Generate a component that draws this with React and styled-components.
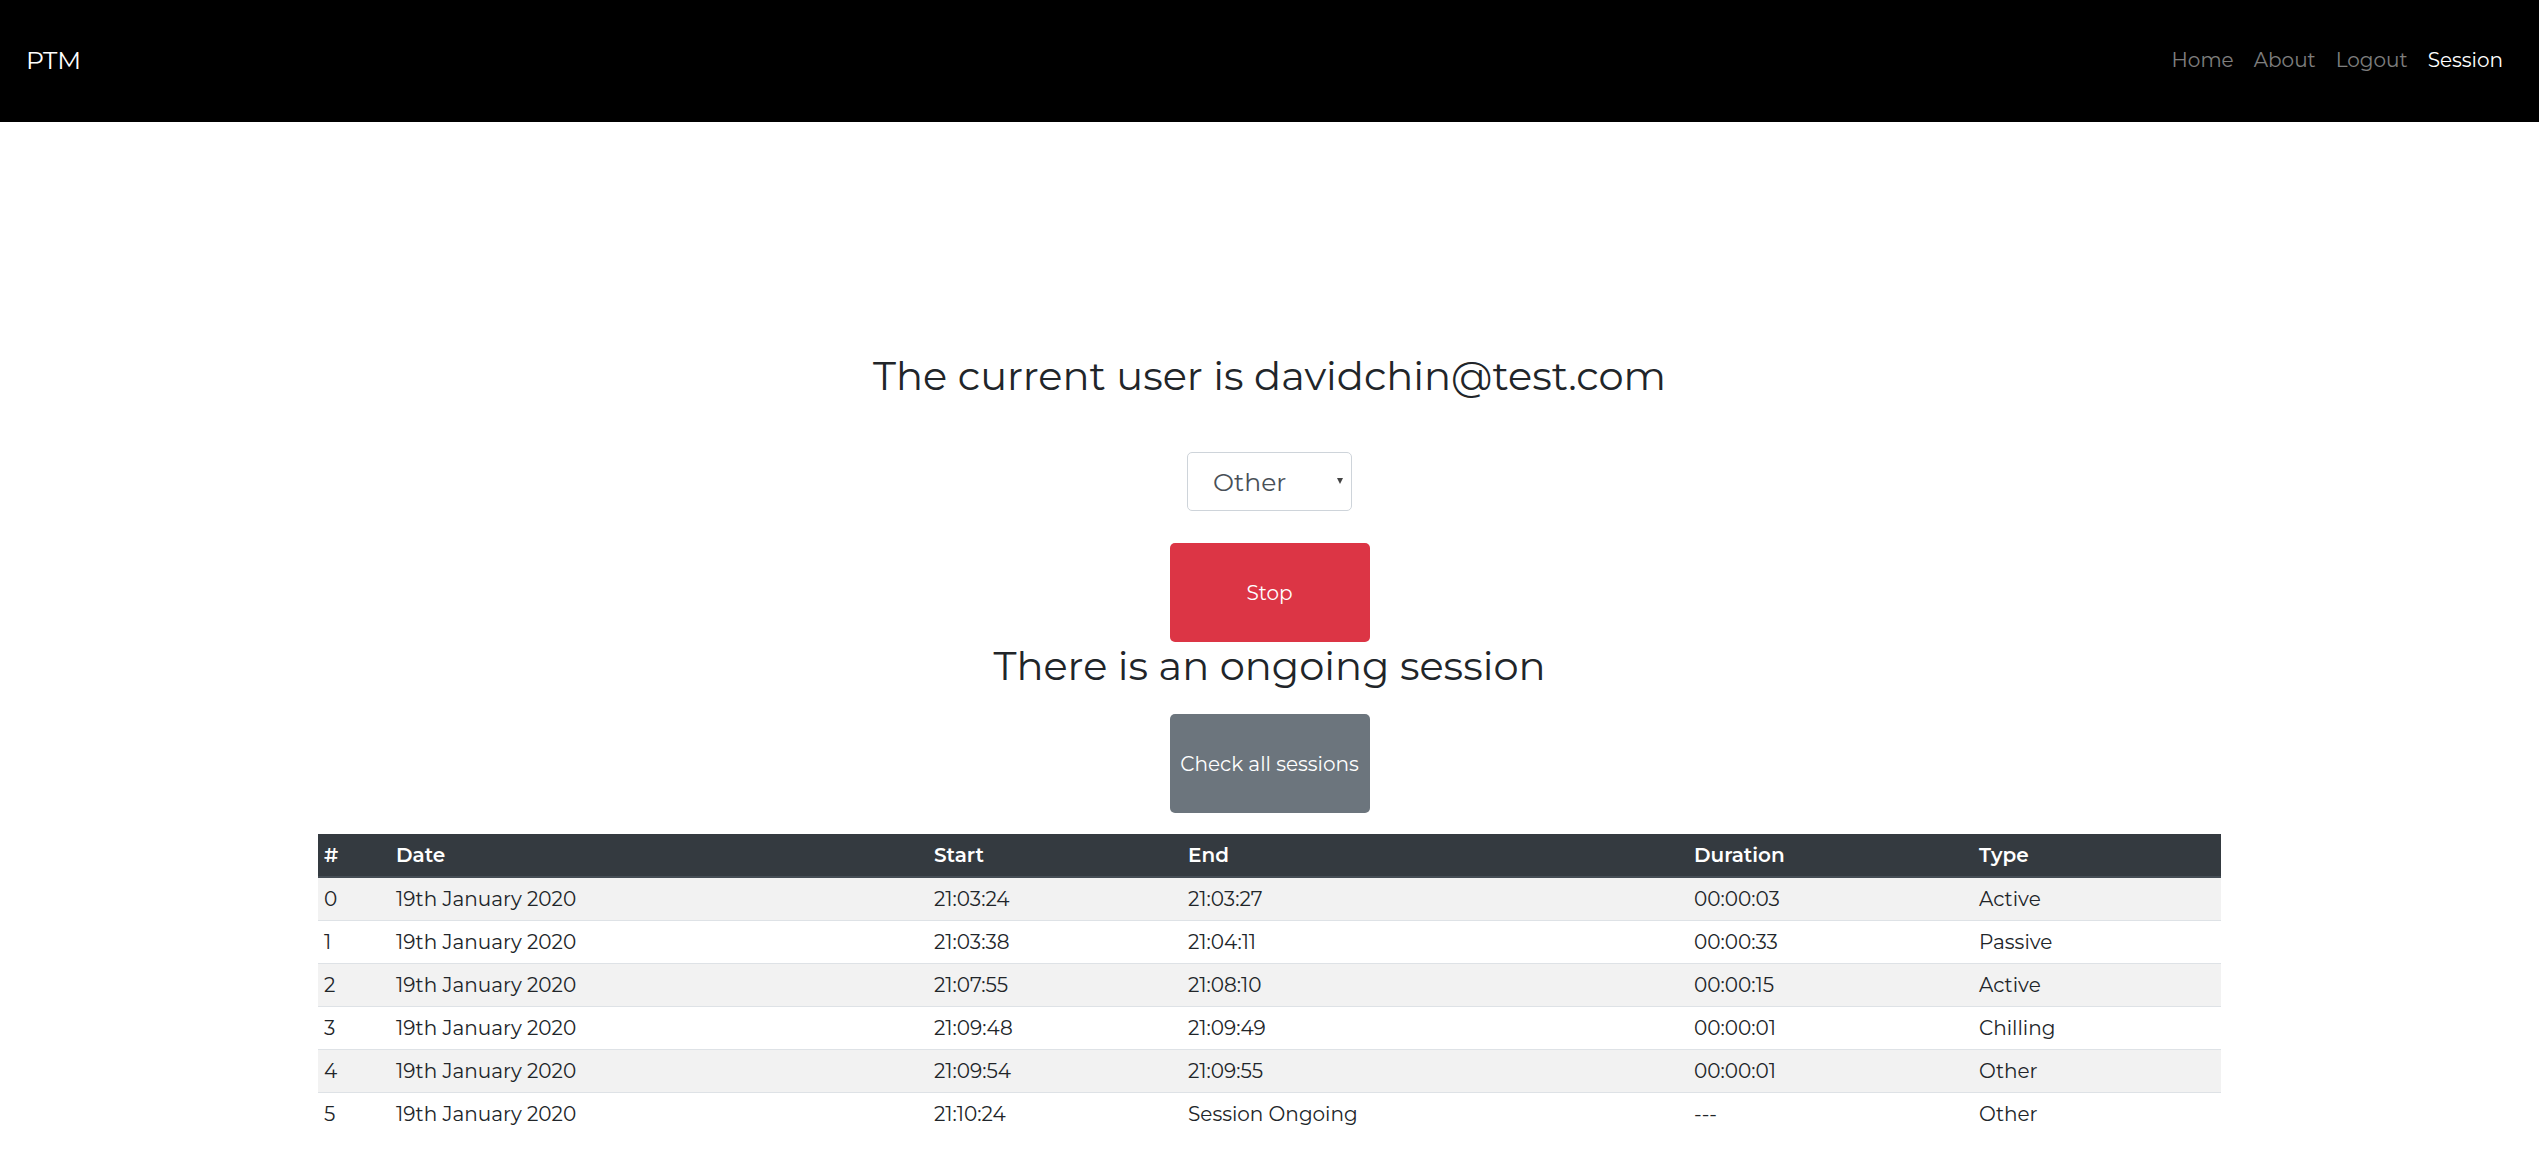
import React from "react";
import styled, { createGlobalStyle } from "styled-components";

const GlobalStyle = createGlobalStyle`
  html, body { margin: 0; padding: 0; background: #fff; }
  body {
    font-family: "Montserrat", "Inter", "Open Sans", sans-serif;
    color: #212529;
    font-weight: 400;
  }
  * { box-sizing: border-box; }
`;

const Navbar = styled.nav`
  height: 122px;
  background: #000;
  display: flex;
  align-items: center;
  justify-content: space-between;
  padding: 0 36px 0 26px;
`;

const Brand = styled.a`
  font-size: 25px;
  font-weight: 400;
  color: #fff;
  text-decoration: none;
  line-height: 1;
  margin-top: -2px;
`;

const NavLinks = styled.div`
  display: flex;
  align-items: center;
  margin-top: -2px;
`;

const NavLink = styled.a`
  padding: 0 10px;
  font-size: 20px;
  font-weight: 400;
  line-height: 30px;
  text-decoration: none;
  color: ${(p) => (p.$active ? "#fff" : "rgba(255,255,255,0.5)")};
  &:last-child { padding-right: 0; }
`;

const Main = styled.main`
  display: flex;
  flex-direction: column;
  align-items: center;
  padding-top: 230px;
`;

const Title = styled.h2`
  margin: 0;
  font-size: 40px;
  line-height: 48px;
  font-weight: 400;
  color: #212529;
`;

const SelectWrap = styled.div`
  position: relative;
  margin-top: 52px;
  width: 165px;
  height: 59px;
`;

const Select = styled.select`
  appearance: none;
  -webkit-appearance: none;
  width: 100%;
  height: 100%;
  border: 1px solid #ced4da;
  border-radius: 5px;
  background: #fff;
  color: #495057;
  font-family: inherit;
  font-size: 25px;
  font-weight: 400;
  padding: 0 0 0 25px;
  outline: none;
`;

const Caret = styled.span`
  position: absolute;
  right: 9px;
  top: 26px;
  width: 0;
  height: 0;
  border-left: 3.5px solid transparent;
  border-right: 3.5px solid transparent;
  border-top: 6px solid #444;
  pointer-events: none;
`;

const Button = styled.button`
  width: 200px;
  height: 99px;
  border: none;
  border-radius: 5px;
  background: ${(p) => p.$bg};
  color: #fff;
  font-family: inherit;
  font-size: 20px;
  font-weight: 400;
  margin-top: ${(p) => p.$mt}px;
  padding: 0;
`;

const TableWrap = styled.div`
  margin-top: 21px;
  width: 1903px;
`;

const Table = styled.table`
  width: 100%;
  border-collapse: collapse;
  table-layout: fixed;
  font-size: 20px;
`;

const Th = styled.th`
  background: #343a40;
  color: #fff;
  text-align: left;
  font-weight: 600;
  padding: 6px;
  line-height: 30px;
  border-bottom: 2px solid #454d55;
`;

const Tr = styled.tr`
  background: ${(p) => (p.$striped ? "#f2f2f2" : "#fff")};
`;

const Td = styled.td`
  padding: 6px;
  line-height: 30px;
  border-top: 1px solid #dee2e6;
  color: #212529;
  font-weight: 400;
  white-space: nowrap;
`;

const cols = [72, 538, 254, 506, 285, 248];
const headers = ["#", "Date", "Start", "End", "Duration", "Type"];
const rows = [
  ["0", "19th January 2020", "21:03:24", "21:03:27", "00:00:03", "Active"],
  ["1", "19th January 2020", "21:03:38", "21:04:11", "00:00:33", "Passive"],
  ["2", "19th January 2020", "21:07:55", "21:08:10", "00:00:15", "Active"],
  ["3", "19th January 2020", "21:09:48", "21:09:49", "00:00:01", "Chilling"],
  ["4", "19th January 2020", "21:09:54", "21:09:55", "00:00:01", "Other"],
  ["5", "19th January 2020", "21:10:24", "Session Ongoing", "---", "Other"],
];

export default function App() {
  return (
    <>
      <GlobalStyle />
      <Navbar>
        <Brand href="#">PTM</Brand>
        <NavLinks>
          <NavLink href="#">Home</NavLink>
          <NavLink href="#">About</NavLink>
          <NavLink href="#">Logout</NavLink>
          <NavLink href="#" $active>Session</NavLink>
        </NavLinks>
      </Navbar>
      <Main>
        <Title>The current user is davidchin@test.com</Title>
        <SelectWrap>
          <Select defaultValue="Other">
            <option>Active</option>
            <option>Passive</option>
            <option>Chilling</option>
            <option>Other</option>
          </Select>
          <Caret />
        </SelectWrap>
        <Button $bg="#dc3545" $mt={32}>Stop</Button>
        <Title>There is an ongoing session</Title>
        <Button $bg="#6c757d" $mt={24}>Check all sessions</Button>
        <TableWrap>
          <Table>
            <colgroup>
              {cols.map((w, i) => (
                <col key={i} style={{ width: w }} />
              ))}
            </colgroup>
            <thead>
              <tr>
                {headers.map((h) => (
                  <Th key={h}>{h}</Th>
                ))}
              </tr>
            </thead>
            <tbody>
              {rows.map((r, i) => (
                <Tr key={i} $striped={i % 2 === 0}>
                  {r.map((c, j) => (
                    <Td key={j}>{c}</Td>
                  ))}
                </Tr>
              ))}
            </tbody>
          </Table>
        </TableWrap>
      </Main>
    </>
  );
}
